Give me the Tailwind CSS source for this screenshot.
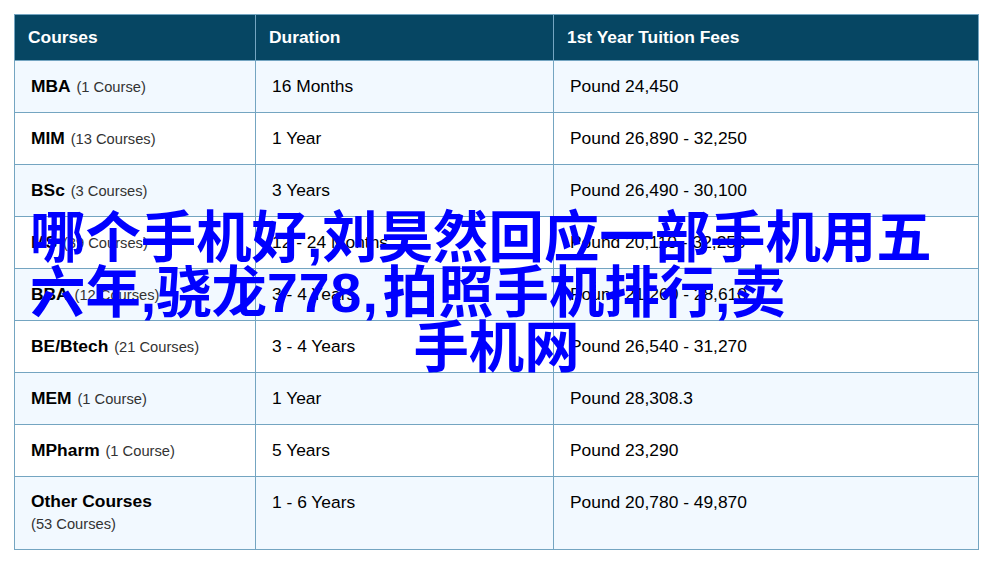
<!DOCTYPE html>
<html lang="zh">
<head>
<meta charset="utf-8">
<script src="https://cdn.jsdelivr.net/npm/@tailwindcss/browser@4"></script>
</head>
<body class="relative w-[993px] h-[570px] overflow-hidden bg-white font-['Liberation_Sans',Arial,sans-serif] text-black">
<div class="pt-[14px] pl-[14px]">
<table class="border-collapse table-fixed w-[964px] text-[17.4px]">
<colgroup><col class="w-[241px]"><col class="w-[298px]"><col class="w-[425px]"></colgroup>
<thead>
<tr class="h-[46px] bg-[#064663] text-white font-bold text-left">
<th class="border border-[#74a5c1] pl-[13px] pb-[1px] font-bold">Courses</th>
<th class="border border-[#74a5c1] pl-[13px] pb-[1px] font-bold">Duration</th>
<th class="border border-[#74a5c1] pl-[13px] pb-[1px] font-bold">1st Year Tuition Fees</th>
</tr>
</thead>
<tbody>
<tr class="h-[52px] bg-[#f2f9ff]">
<td class="border border-[#74a5c1] pl-[16px]"><b>MBA</b> <span class="ml-[1px] text-[14.7px] text-[#333]">(1 Course)</span></td>
<td class="border border-[#74a5c1] pl-[16px] pb-[1px]">16 Months</td>
<td class="border border-[#74a5c1] pl-[16px] pb-[1px]">Pound 24,450</td>
</tr>
<tr class="h-[52px] bg-white">
<td class="border border-[#74a5c1] pl-[16px]"><b>MIM</b> <span class="ml-[1px] text-[14.7px] text-[#333]">(13 Courses)</span></td>
<td class="border border-[#74a5c1] pl-[16px] pb-[1px]">1 Year</td>
<td class="border border-[#74a5c1] pl-[16px] pb-[1px]">Pound 26,890 - 32,250</td>
</tr>
<tr class="h-[52px] bg-[#f2f9ff]">
<td class="border border-[#74a5c1] pl-[16px]"><b>BSc</b> <span class="ml-[1px] text-[14.7px] text-[#333]">(3 Courses)</span></td>
<td class="border border-[#74a5c1] pl-[16px] pb-[1px]">3 Years</td>
<td class="border border-[#74a5c1] pl-[16px] pb-[1px]">Pound 26,490 - 30,100</td>
</tr>
<tr class="h-[52px] bg-white">
<td class="border border-[#74a5c1] pl-[16px]"><b>MS</b> <span class="ml-[1px] text-[14.7px] text-[#333]">(39 Courses)</span></td>
<td class="border border-[#74a5c1] pl-[16px] pb-[1px]">12 - 24 Months</td>
<td class="border border-[#74a5c1] pl-[16px] pb-[1px]">Pound 20,110 - 32,250</td>
</tr>
<tr class="h-[52px] bg-[#f2f9ff]">
<td class="border border-[#74a5c1] pl-[16px]"><b>BBA</b> <span class="ml-[1px] text-[14.7px] text-[#333]">(12 Courses)</span></td>
<td class="border border-[#74a5c1] pl-[16px] pb-[1px]">3 - 4 Years</td>
<td class="border border-[#74a5c1] pl-[16px] pb-[1px]">Pound 21,260 - 28,610</td>
</tr>
<tr class="h-[52px] bg-white">
<td class="border border-[#74a5c1] pl-[16px]"><b>BE/Btech</b> <span class="ml-[1px] text-[14.7px] text-[#333]">(21 Courses)</span></td>
<td class="border border-[#74a5c1] pl-[16px] pb-[1px]">3 - 4 Years</td>
<td class="border border-[#74a5c1] pl-[16px] pb-[1px]">Pound 26,540 - 31,270</td>
</tr>
<tr class="h-[52px] bg-[#f2f9ff]">
<td class="border border-[#74a5c1] pl-[16px]"><b>MEM</b> <span class="ml-[1px] text-[14.7px] text-[#333]">(1 Course)</span></td>
<td class="border border-[#74a5c1] pl-[16px] pb-[1px]">1 Year</td>
<td class="border border-[#74a5c1] pl-[16px] pb-[1px]">Pound 28,308.3</td>
</tr>
<tr class="h-[52px] bg-white">
<td class="border border-[#74a5c1] pl-[16px]"><b>MPharm</b> <span class="ml-[1px] text-[14.7px] text-[#333]">(1 Course)</span></td>
<td class="border border-[#74a5c1] pl-[16px] pb-[1px]">5 Years</td>
<td class="border border-[#74a5c1] pl-[16px] pb-[1px]">Pound 23,290</td>
</tr>
<tr class="h-[73px] bg-[#f2f9ff]">
<td class="border border-[#74a5c1] pl-[16px] pb-[2px] leading-[22px]"><b>Other Courses</b><br><span class="text-[14.7px] text-[#333]">(53 Courses)</span></td>
<td class="border border-[#74a5c1] pl-[16px] align-top pt-[14px] leading-[22px]">1 - 6 Years</td>
<td class="border border-[#74a5c1] pl-[16px] align-top pt-[14px] leading-[22px]">Pound 20,780 - 49,870</td>
</tr>
</tbody>
</table>
</div>
<div class="absolute left-[30px] top-[211px] w-[933px] text-[#0000ff] text-[55.4px] leading-[55px] font-bold font-['Liberation_Sans','Noto_Sans_CJK_SC',sans-serif] whitespace-nowrap">
<div>哪个手机好,刘昊然回应一部手机用五</div>
<div>六年,骁龙<span class="tracking-[1px]">778</span><span class="mr-[5px]">,</span>拍照手机排行,卖</div>
<div class="text-center">手机网</div>
</div>
</body>
</html>
